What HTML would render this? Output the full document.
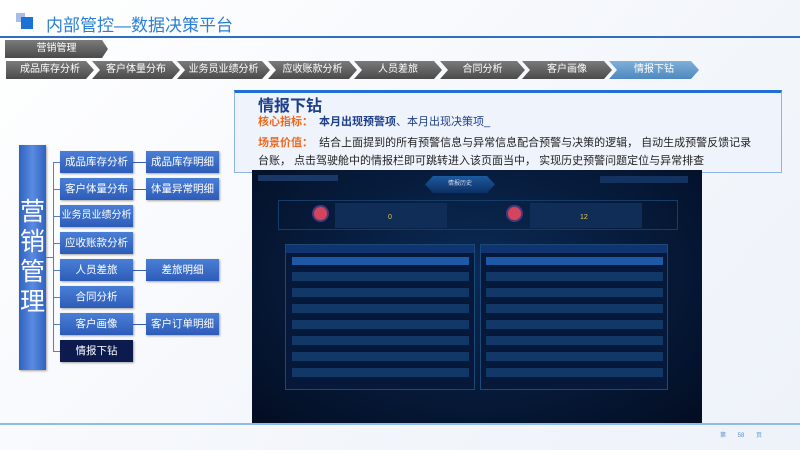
<!DOCTYPE html>
<html><head><meta charset="utf-8"><style>
*{margin:0;padding:0;box-sizing:border-box}
body{width:800px;height:450px;overflow:hidden;background:linear-gradient(135deg,#fff 0%,#f3f6fb 60%,#eef2f9 100%);font-family:"Liberation Sans","Noto Sans CJK SC",sans-serif;position:relative}
.abs{position:absolute}
.chev{position:absolute;height:18px;color:#fff;font-size:10px;line-height:18px;text-align:center;background:linear-gradient(#7a7a7a,#4a4a4a);clip-path:polygon(0 0,calc(100% - 8px) 0,100% 50%,calc(100% - 8px) 100%,0 100%,8px 50%)}
.n{position:absolute;width:73px;height:22px;background:linear-gradient(#4a7fd6,#2d5cb8);color:#fff;font-size:10.5px;line-height:22px;text-align:center;box-shadow:1px 1px 2px rgba(0,0,0,.35)}
.row{position:absolute;height:9px;background:#123868}
</style></head><body>
<div class="abs" style="left:16px;top:13px;width:9px;height:9px;background:#a9bde8"></div>
<div class="abs" style="left:21px;top:17px;width:12px;height:12px;background:#1a73d4"></div>
<div class="abs" style="left:46px;top:11px;font-size:17px;color:#2a7fd6">内部管控—数据决策平台</div>
<div class="abs" style="left:0;top:36px;width:800px;height:2px;background:#2e6fbf"></div>

<div class="chev" style="left:5px;top:40px;width:103px;clip-path:polygon(0 0,calc(100% - 6px) 0,100% 50%,calc(100% - 6px) 100%,0 100%)">营销管理</div>
<div class="chev" style="left:6px;top:61px;width:88px;clip-path:polygon(0 0,calc(100% - 8px) 0,100% 50%,calc(100% - 8px) 100%,0 100%)">成品库存分析</div>
<div class="chev" style="left:92px;top:61px;width:88px">客户体量分布</div>
<div class="chev" style="left:177px;top:61px;width:93px">业务员业绩分析</div>
<div class="chev" style="left:268px;top:61px;width:89px">应收账款分析</div>
<div class="chev" style="left:354px;top:61px;width:88px">人员差旅</div>
<div class="chev" style="left:440px;top:61px;width:85px">合同分析</div>
<div class="chev" style="left:522px;top:61px;width:90px">客户画像</div>
<div class="chev" style="left:609px;top:61px;width:90px;background:linear-gradient(#7fb0d8,#4e88bf)">情报下钻</div>

<div class="abs" style="left:234px;top:90px;width:548px;height:83px;background:#eef3fc;border:1px solid #8eb4ee;border-top:3px solid #1f6fd6"></div>
<div class="abs" style="left:258px;top:92px;font-size:16px;font-weight:bold;color:#1d3f8a">情报下钻</div>
<div class="abs" style="left:258px;top:113px;font-size:11px;font-weight:bold;color:#f06a1e">核心指标：<span style="color:#1d3f8a;margin-left:6px">本月出现预警项</span><span style="color:#1d3f8a;font-weight:normal">、本月出现决策项_</span></div>
<div class="abs" style="left:258px;top:134px;width:500px;font-size:11px;line-height:18px;color:#222"><b style="color:#f06a1e">场景价值：</b>&nbsp;&nbsp;结合上面提到的所有预警信息与异常信息配合预警与决策的逻辑， 自动生成预警反馈记录台账， 点击驾驶舱中的情报栏即可跳转进入该页面当中， 实现历史预警问题定位与异常排查</div>

<div class="abs" style="left:252px;top:170px;width:450px;height:253px;background:radial-gradient(ellipse at 50% 40%,#0b2a55,#051632 70%,#030d22)"></div>
<div class="abs" style="left:258px;top:175px;width:80px;height:6px;background:#1a3866"></div>
<div class="abs" style="left:425px;top:176px;width:70px;height:17px;background:linear-gradient(#1c5aa0,#0d2f63);clip-path:polygon(8px 0,calc(100% - 8px) 0,100% 50%,calc(100% - 8px) 100%,8px 100%,0 50%);color:#dde;font-size:6px;line-height:17px;text-align:center">情报历史</div>
<div class="abs" style="left:600px;top:176px;width:88px;height:7px;background:#143260"></div>
<div class="abs" style="left:278px;top:200px;width:400px;height:30px;border:1px solid #163c6a"></div>
<div class="abs" style="left:335px;top:203px;width:112px;height:25px;background:#0f2d57"></div>
<div class="abs" style="left:530px;top:203px;width:112px;height:25px;background:#0f2d57"></div>
<div class="abs" style="left:314px;top:207px;width:13px;height:13px;border-radius:50%;background:#d4455c;box-shadow:0 0 0 2px #4b3a7a"></div>
<div class="abs" style="left:508px;top:207px;width:13px;height:13px;border-radius:50%;background:#d4455c;box-shadow:0 0 0 2px #4b3a7a"></div>
<div class="abs" style="left:388px;top:214px;font-size:7px;color:#e8c85a">0</div>
<div class="abs" style="left:580px;top:214px;font-size:7px;color:#e8c85a">12</div>
<div class="abs" style="left:285px;top:244px;width:190px;height:146px;border:1px solid #1c4a78;background:#06193a"></div>
<div class="abs" style="left:480px;top:244px;width:188px;height:146px;border:1px solid #1c4a78;background:#06193a"></div>
<div class="abs" style="left:286px;top:245px;width:188px;height:8px;background:#0f3470"></div>
<div class="abs" style="left:481px;top:245px;width:186px;height:8px;background:#0f3470"></div>
<div class="abs" style="left:292px;top:257px;width:177px;height:8px;background:#1e59a8"></div>
<div class="abs" style="left:486px;top:257px;width:177px;height:8px;background:#1e59a8"></div>
<div class="row" style="left:292px;top:272px;width:177px"></div><div class="row" style="left:486px;top:272px;width:177px"></div>
<div class="row" style="left:292px;top:288px;width:177px"></div><div class="row" style="left:486px;top:288px;width:177px"></div>
<div class="row" style="left:292px;top:304px;width:177px"></div><div class="row" style="left:486px;top:304px;width:177px"></div>
<div class="row" style="left:292px;top:320px;width:177px"></div><div class="row" style="left:486px;top:320px;width:177px"></div>
<div class="row" style="left:292px;top:336px;width:177px"></div><div class="row" style="left:486px;top:336px;width:177px"></div>
<div class="row" style="left:292px;top:352px;width:177px"></div><div class="row" style="left:486px;top:352px;width:177px"></div>
<div class="row" style="left:292px;top:368px;width:177px"></div><div class="row" style="left:486px;top:368px;width:177px"></div>

<div class="abs" style="left:0;top:423px;width:800px;height:2px;background:#8fbbe8"></div>
<div class="abs" style="left:720px;top:430px;font-size:6px;color:#5a8fd0;word-spacing:10px">第 58 页</div>

<div class="abs" style="left:19px;top:145px;width:27px;height:225px;background:linear-gradient(90deg,#2f62c0,#5a8be0,#2f62c0);box-shadow:1px 1px 2px rgba(0,0,0,.35);color:#fff;font-size:25px;line-height:30px;text-align:center;padding-top:52px">营<br>销<br>管<br>理</div>
<div class="abs" style="left:46px;top:257px;width:7px;height:1px;background:#5a7fb8"></div>
<div class="abs" style="left:53px;top:162px;width:1px;height:190px;background:#5a7fb8"></div>
<div class="abs" style="left:53px;top:162px;width:7px;height:1px;background:#5a7fb8"></div>
<div class="abs" style="left:53px;top:189px;width:7px;height:1px;background:#5a7fb8"></div>
<div class="abs" style="left:53px;top:216px;width:7px;height:1px;background:#5a7fb8"></div>
<div class="abs" style="left:53px;top:243px;width:7px;height:1px;background:#5a7fb8"></div>
<div class="abs" style="left:53px;top:270px;width:7px;height:1px;background:#5a7fb8"></div>
<div class="abs" style="left:53px;top:297px;width:7px;height:1px;background:#5a7fb8"></div>
<div class="abs" style="left:53px;top:324px;width:7px;height:1px;background:#5a7fb8"></div>
<div class="abs" style="left:53px;top:351px;width:7px;height:1px;background:#5a7fb8"></div>
<div class="abs" style="left:133px;top:162px;width:13px;height:1px;background:#3a5fa8"></div>
<div class="abs" style="left:133px;top:189px;width:13px;height:1px;background:#3a5fa8"></div>
<div class="abs" style="left:133px;top:270px;width:13px;height:1px;background:#3a5fa8"></div>
<div class="abs" style="left:133px;top:324px;width:13px;height:1px;background:#3a5fa8"></div>
<div class="n" style="left:60px;top:151px">成品库存分析</div>
<div class="n" style="left:60px;top:178px">客户体量分布</div>
<div class="n" style="left:60px;top:205px;font-size:10px">业务员业绩分析</div>
<div class="n" style="left:60px;top:232px">应收账款分析</div>
<div class="n" style="left:60px;top:259px">人员差旅</div>
<div class="n" style="left:60px;top:286px">合同分析</div>
<div class="n" style="left:60px;top:313px">客户画像</div>
<div class="n" style="left:60px;top:340px;background:#0c1a4e">情报下钻</div>
<div class="n" style="left:146px;top:151px">成品库存明细</div>
<div class="n" style="left:146px;top:178px">体量异常明细</div>
<div class="n" style="left:146px;top:259px">差旅明细</div>
<div class="n" style="left:146px;top:313px">客户订单明细</div>
</body></html>
